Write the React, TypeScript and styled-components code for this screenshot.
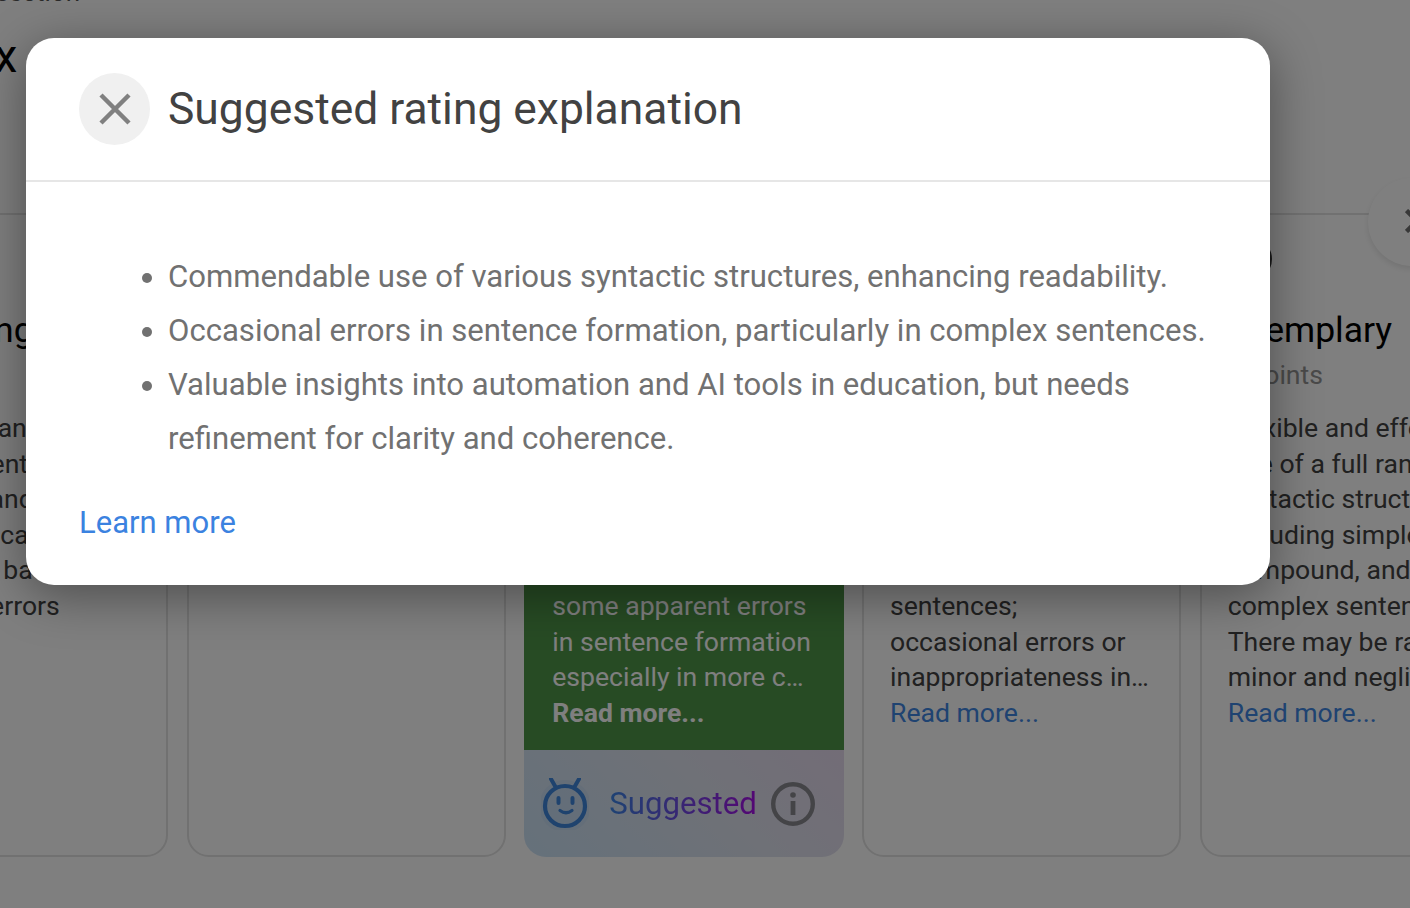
import React from "react";
import styled, { createGlobalStyle } from "styled-components";

const Global = createGlobalStyle`
  html, body { margin: 0; padding: 0; background: #fff; }
  body { font-family: Roboto, "Liberation Sans", sans-serif; }
`;

const Page = styled.div`
  position: relative;
  width: 1410px;
  height: 908px;
  overflow: hidden;
  background: #fff;
`;

const PageContent = styled.main`
  display: flex;
  flex-direction: column;
  margin-top: -26px;
`;

const Crumb = styled.div`
  margin-left: -120px;
  height: 36px;
  font-size: 26px;
  line-height: 36px;
  color: #555;
  white-space: nowrap;
`;

const Heading = styled.h1`
  margin: 18px 0 0 -120px;
  height: 56px;
  font-size: 46px;
  line-height: 56px;
  font-weight: 400;
  color: #000;
  white-space: nowrap;
`;

const CardRow = styled.section`
  display: flex;
  gap: 18.75px;
  margin: 129px 0 0 -151.25px;
`;

const Card = styled.article<{ $active?: boolean }>`
  flex: 0 0 ${(p) => (p.$active ? "320px" : "319px")};
  margin-right: ${(p) => (p.$active ? "-1px" : "0")};
  box-sizing: border-box;
  height: 644px;
  display: flex;
  flex-direction: column;
  border-radius: 22px;
  overflow: hidden;
  border: ${(p) => (p.$active ? "0" : "2px solid #e2e2e2")};
`;

const CardBody = styled.div<{ $active?: boolean }>`
  flex: 1;
  padding: ${(p) => (p.$active ? "24px 28px 0" : "22px 26px 0")};
  background: ${(p) => (p.$active ? "#4e9648" : "transparent")};
  color: ${(p) => (p.$active ? "#fff" : "#424242")};
`;

const LevelIcon = styled.div<{ $active?: boolean }>`
  box-sizing: border-box;
  width: 44px;
  height: 44px;
  border-radius: 50%;
  border: 4px solid ${(p) => (p.$active ? "#fff" : "#333")};
`;

const CardTitle = styled.h2<{ $active?: boolean }>`
  margin: 28px 0 0;
  font-size: 35.5px;
  line-height: 42px;
  font-weight: 400;
  color: ${(p) => (p.$active ? "#fff" : "#000")};
  white-space: nowrap;
`;

const Points = styled.div<{ $active?: boolean }>`
  margin-top: 6px;
  font-size: 26.6px;
  line-height: 36px;
  color: ${(p) => (p.$active ? "#fff" : "#949494")};
  white-space: nowrap;
`;

const Description = styled.div`
  margin-top: 17px;
  font-size: 26.6px;
  line-height: 35.6px;
`;

const Line = styled.span`
  display: block;
  white-space: nowrap;
`;

const ReadMore = styled.a<{ $active?: boolean }>`
  display: block;
  color: ${(p) => (p.$active ? "#fff" : "#3f86e2")};
  font-weight: ${(p) => (p.$active ? 700 : 400)};
`;

const SuggestedBar = styled.div`
  flex: 0 0 107px;
  display: flex;
  align-items: center;
  padding: 0 29px 0 17px;
  background: linear-gradient(45deg, #cbe2f6 0%, #dfe2ee 60%, #e6daee 100%);
`;

const SuggestedLabel = styled.span`
  margin: 0 auto 0 20px;
  font-size: 31.2px;
  line-height: 40px;
  background: linear-gradient(90deg, #3b86e6 0%, #a80ee8 100%);
  -webkit-background-clip: text;
  background-clip: text;
  color: transparent;
`;

const ScrollButton = styled.button`
  position: absolute;
  left: 1368px;
  top: 178px;
  width: 88px;
  height: 88px;
  padding: 0 0 2px 10px;
  border: 0;
  border-radius: 50%;
  background: #fff;
  box-shadow: 0 3px 6px rgba(0, 0, 0, 0.1);
  display: flex;
  align-items: center;
  justify-content: center;
`;

const Overlay = styled.div`
  position: absolute;
  inset: 0;
  background: rgba(0, 0, 0, 0.5);
  padding: 38px 0 0 26px;
  box-sizing: border-box;
`;

const Modal = styled.div`
  width: 1244px;
  height: 547px;
  display: flex;
  flex-direction: column;
  border-radius: 28px;
  background: #fff;
  box-shadow: 0 10px 50px rgba(0, 0, 0, 0.4);
`;

const ModalHeader = styled.header`
  flex: 0 0 144px;
  box-sizing: border-box;
  display: flex;
  align-items: center;
  gap: 18px;
  padding: 0 0 0 53px;
  border-bottom: 2px solid #e6e6e6;
`;

const CloseButton = styled.button`
  width: 71px;
  height: 72px;
  padding: 0;
  border: 0;
  border-radius: 50%;
  background: #f0f0f0;
  display: flex;
  align-items: center;
  justify-content: center;
`;

const ModalTitle = styled.h2`
  margin: 0;
  font-size: 44.4px;
  line-height: 56px;
  font-weight: 400;
  color: #424242;
  white-space: nowrap;
`;

const ReasonList = styled.ul`
  margin: 68px 0 0;
  padding: 0 0 0 142px;
  list-style: disc;
  color: #717171;
  font-size: 31.1px;
  line-height: 54px;
`;

const Reason = styled.li`
  white-space: pre-line;
  &::marker { color: #717171; }
`;

const LearnMore = styled.a`
  margin: 37px 0 0 53px;
  font-size: 31px;
  line-height: 40px;
  color: #3b82e0;
`;

type CardData = { title: string; points: string; lines: string[]; active?: boolean; suggested?: boolean };

const cards: CardData[] = [
  {
    title: "Beginning",
    points: "2 points",
    lines: [
      "Uses only an",
      "a stable sentence",
      "structure and",
      "on limited capacity",
      "structures basic",
      "recurrent errors",
    ],
  },
  { title: "Emerging", points: "3 points", lines: ["Uses simple sentence", "structures with", "limited variety"] },
  {
    title: "Proficient",
    points: "4 points",
    active: true,
    suggested: true,
    lines: [
      "Uses a mix of simple",
      "and complex sentence",
      "structures effectively,",
      "with good control,",
      "though there are",
      "some apparent errors",
      "in sentence formation",
      "especially in more c…",
    ],
  },
  {
    title: "Advanced",
    points: "5 points",
    lines: [
      "Uses a wide range of",
      "sentence structures,",
      "including complex",
      "and compound",
      "forms, with few",
      "sentences;",
      "occasional errors or",
      "inappropriateness in…",
    ],
  },
  {
    title: "Exemplary",
    points: "6 points",
    lines: [
      "Flexible and effective",
      "Use of a full range of",
      "syntactic structures",
      "including simple,",
      "compound, and",
      "complex sentences.",
      "There may be rare",
      "minor and negligible",
    ],
  },
];

const reasons = [
  "Commendable use of various syntactic structures, enhancing readability.",
  "Occasional errors in sentence formation, particularly in complex sentences.",
  "Valuable insights into automation and AI tools in education, but needs\nrefinement for clarity and coherence.",
];

const CrossIcon = ({ size, color, width }: { size: number; color: string; width: number }) => (
  <svg width={size} height={size} viewBox="0 0 32 32" fill="none" stroke={color} strokeWidth={width}>
    <path d="M2 2 L30 30 M30 2 L2 30" />
  </svg>
);

const RobotIcon = () => (
  <svg width="48" height="52" viewBox="0 0 48 52" fill="none">
    <circle cx="24" cy="28" r="26" fill="#5fa4e8" opacity="0.08" />
    <circle cx="24" cy="28" r="20" stroke="#3f86dc" strokeWidth="4.2" />
    <path d="M10 1 L14 8 M38 1 L34 8" stroke="#3f86dc" strokeWidth="4" strokeLinecap="round" />
    <path d="M17.5 20 V25 M31.5 20 V25" stroke="#3f86dc" strokeWidth="4" strokeLinecap="round" />
    <path d="M19 32.5 Q25 37 31 32.5" stroke="#3f86dc" strokeWidth="3.2" strokeLinecap="round" />
  </svg>
);

const InfoIcon = () => (
  <svg width="44" height="44" viewBox="0 0 44 44" fill="none">
    <circle cx="22" cy="22" r="19.8" stroke="#88888f" strokeWidth="4.4" />
    <circle cx="22" cy="13" r="2.8" fill="#88888f" />
    <rect x="19.6" y="19" width="4.8" height="14" fill="#88888f" />
  </svg>
);

export default function App() {
  return (
    <Page>
      <Global />
      <PageContent>
        <Crumb>Grammar section</Crumb>
        <Heading>Syntax</Heading>
        <CardRow>
          {cards.map((c) => (
            <Card key={c.title} $active={c.active}>
              <CardBody $active={c.active}>
                <LevelIcon $active={c.active} />
                <CardTitle $active={c.active}>{c.title}</CardTitle>
                <Points $active={c.active}>{c.points}</Points>
                <Description>
                  {c.lines.map((l) => (
                    <Line key={l}>{l}</Line>
                  ))}
                  {c.lines.length === 8 && <ReadMore $active={c.active}>Read more...</ReadMore>}
                </Description>
              </CardBody>
              {c.suggested && (
                <SuggestedBar>
                  <RobotIcon />
                  <SuggestedLabel>Suggested</SuggestedLabel>
                  <InfoIcon />
                </SuggestedBar>
              )}
            </Card>
          ))}
        </CardRow>
      </PageContent>
      <ScrollButton aria-label="Next">
        <CrossIcon size={24} color="#707070" width={6} />
      </ScrollButton>
      <Overlay>
        <Modal>
          <ModalHeader>
            <CloseButton aria-label="Close">
              <CrossIcon size={32} color="#808080" width={4.5} />
            </CloseButton>
            <ModalTitle>Suggested rating explanation</ModalTitle>
          </ModalHeader>
          <ReasonList>
            {reasons.map((r) => (
              <Reason key={r}>{r}</Reason>
            ))}
          </ReasonList>
          <LearnMore>Learn more</LearnMore>
        </Modal>
      </Overlay>
    </Page>
  );
}
